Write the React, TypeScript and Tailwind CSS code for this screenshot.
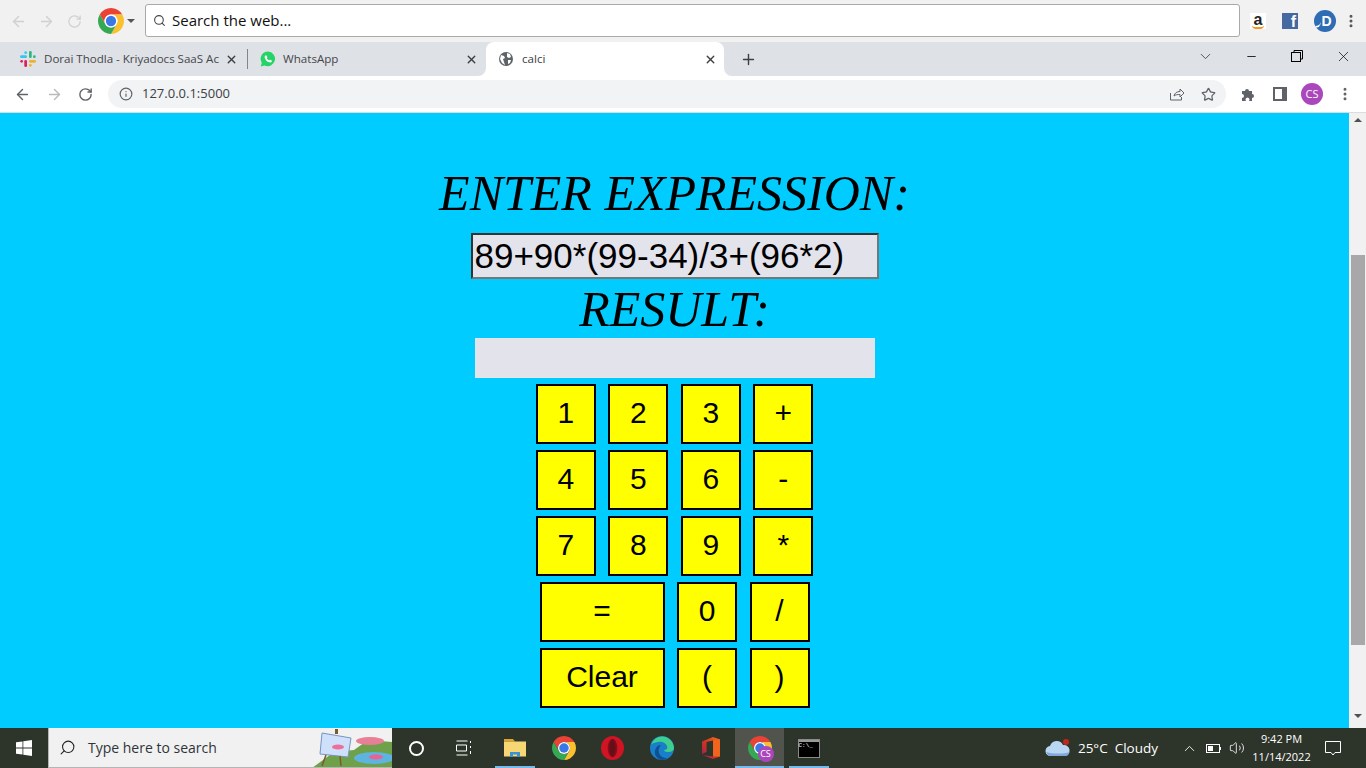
import {
  ArrowLeft,
  ArrowRight,
  ChevronDown,
  ChevronUp,
  EllipsisVertical,
  Info,
  Minus,
  Plus,
  RotateCw,
  Search,
  Star,
  Volume2,
  X,
} from "lucide-react";

const uiFont = "font-['Open_Sans','Noto_Sans',sans-serif]";

const rows = [
  { wide: false, keys: ["1", "2", "3", "+"] },
  { wide: false, keys: ["4", "5", "6", "-"] },
  { wide: false, keys: ["7", "8", "9", "*"] },
  { wide: true, keys: ["=", "0", "/"] },
  { wide: true, keys: ["Clear", "(", ")"] },
];

function ChromeLogo({ size = 26 }: { size?: number }) {
  return (
    <svg width={size} height={size} viewBox="0 0 48 48">
      <path d="M44.78 12A24 24 0 0 0 3.22 12L13.6 30A12 12 0 0 1 24 12z" fill="#ea4335" />
      <path d="M24 12h20.78A24 24 0 0 1 24 48L34.4 30A12 12 0 0 0 24 12z" fill="#fbc02d" />
      <path d="M24 48A24 24 0 0 1 3.22 12L13.6 30A12 12 0 0 0 34.4 30z" fill="#34a853" />
      <circle cx="24" cy="24" r="12" fill="#fff" />
      <circle cx="24" cy="24" r="9.5" fill="#3b78e7" />
    </svg>
  );
}

function SlackLogo() {
  return (
    <svg width="16" height="16" viewBox="0 0 16 16">
      <rect x="0" y="4.300" width="7" height="2.700" rx="1.350" fill="#36c5f0" />
      <circle cx="5.650" cy="1.650" r="1.350" fill="#36c5f0" />
      <rect x="9" y="0" width="2.700" height="7" rx="1.350" fill="#2eb67d" />
      <circle cx="14.350" cy="5.650" r="1.350" fill="#2eb67d" />
      <rect x="9" y="9" width="7" height="2.700" rx="1.350" fill="#ecb22e" />
      <circle cx="10.350" cy="14.350" r="1.350" fill="#ecb22e" />
      <rect x="4.300" y="9" width="2.700" height="7" rx="1.350" fill="#e01e5a" />
      <circle cx="1.650" cy="10.350" r="1.350" fill="#e01e5a" />
    </svg>
  );
}

function WhatsAppLogo() {
  return (
    <svg width="16" height="16" viewBox="0 0 16 16">
      <path d="M8 .5a7.3 7.3 0 0 0-6.2 11.2L.8 15.4l3.800-1A7.3 7.3 0 1 0 8 .5z" fill="#25d366" />
      <path
        d="M5.600 4.200c-.9.600-1.200 1.800-.6 3.200.8 1.800 2.300 3.300 4.100 3.900 1.300.4 2.300 0 2.700-.9.200-.5.100-.8-.2-1l-1.300-.6c-.3-.1-.5 0-.7.200l-.4.500c-1-.4-1.900-1.200-2.400-2.200l.4-.5c.2-.2.200-.4.100-.7l-.6-1.300c-.2-.3-.6-.4-1.100-.1z"
        fill="#fff"
      />
    </svg>
  );
}

function GlobeIcon() {
  return (
    <svg width="16" height="16" viewBox="0 0 16 16">
      <circle cx="8" cy="8" r="7" fill="#5f6368" />
      <path d="M3 4l3 1 1 2-2 1 1 3 1 3-3-2-2-4zM9 2l3 1 1 3-2 1-2-1zM10 9l3 0-1 3-2 1z" fill="#fff" />
    </svg>
  );
}

function FolderIcon() {
  return (
    <svg width="22" height="18" viewBox="0 0 22 18">
      <path d="M0 0h9l2 2.500H0z" fill="#e0a526" />
      <rect x="0" y="2.500" width="22" height="15" fill="#f7d774" />
      <path d="M6 18v-5h10v5h-3v-2.500H9V18z" fill="#3b93d6" />
    </svg>
  );
}

function OperaIcon() {
  return (
    <svg width="23" height="24" viewBox="0 0 23 24">
      <ellipse cx="11.500" cy="12" rx="11.500" ry="12" fill="#cf1424" />
      <ellipse cx="11.500" cy="12" rx="4.800" ry="9.300" fill="#8c0d18" />
      <ellipse cx="11.500" cy="12" rx="3" ry="8.400" fill="#63101a" />
    </svg>
  );
}

function EdgeIcon() {
  return (
    <svg width="24" height="24" viewBox="0 0 24 24">
      <circle cx="12" cy="12" r="12" fill="#1a7fc9" />
      <path d="M1 9C3 2 10-1 16 1c5 2 8 7 8 11 0 3-3 4-6 4-2 0-4-1-4-2 3 0 4-2 3-4-1-3-5-5-9-4-3 .5-6 1-7 3z" fill="#3ecf8e" />
      <path d="M12 24C6 23 3 17 6 12c1-2 3-3 5-3-2 2-3 5-2 8 1 3 4 5 8 5-1 1-3 2-5 2z" fill="#0f4f94" />
    </svg>
  );
}

function OfficeIcon() {
  return (
    <svg width="18" height="22" viewBox="0 0 18 22">
      <defs>
        <linearGradient id="office" x1="0" y1="1" x2="1" y2="0">
          <stop offset="0" stopColor="#9c1c5e" />
          <stop offset="0.5" stopColor="#d8341f" />
          <stop offset="1" stopColor="#f5741c" />
        </linearGradient>
      </defs>
      <path d="M11 0l7 2.500v17L11 22 0 18l11 1.600V3.500L4.500 5v10L0 17V4.500z" fill="url(#office)" />
      <path d="M11 3.500l7-1v17l-7 0z" fill="#f0641d" />
    </svg>
  );
}

function TaskIcon({ children, active, running }: { children: React.ReactNode; active?: boolean; running?: boolean }) {
  return (
    <div className={`relative flex h-10 w-[49px] shrink-0 items-center justify-center ${active ? "bg-[#51544c]" : ""}`}>
      {children}
      {running && <div className="absolute bottom-0 left-[5px] right-[4px] h-0.5 bg-[#76b9ed]" />}
      {active && <div className="absolute bottom-0 left-0 right-0 h-0.5 bg-[#76b9ed]" />}
    </div>
  );
}

function Key({ label, wide }: { label: string; wide?: boolean }) {
  return (
    <button
      className={`h-[60px] border-2 border-black bg-[#ffff00] pb-[3px] text-center text-[30px] text-black ${
        wide ? "w-[125px]" : "w-[60px]"
      }`}
    >
      {label}
    </button>
  );
}

export default function App() {
  return (
    <div className={`flex h-screen w-screen flex-col overflow-hidden ${uiFont}`}>
      {/* toolbar of the search extension */}
      <div className="flex h-[42px] shrink-0 items-center bg-[#f1f1f1] pl-[10px] pr-[7px]">
        <ArrowLeft size={17} className="text-[#d0d0d0]" />
        <ArrowRight size={17} className="ml-[11px] text-[#d0d0d0]" />
        <RotateCw size={15} className="ml-[12px] text-[#d0d0d0]" />
        <div className="ml-[16px] flex">
          <ChromeLogo />
        </div>
        <div className="ml-[3px] h-0 w-0 border-x-[4px] border-t-[4px] border-x-transparent border-t-[#555]" />
        <div className="mb-px ml-[10px] flex h-[33px] w-[1095px] items-center rounded-[3px] border border-[#a9a9a9] bg-white pl-[7px]">
          <Search size={13} className="text-[#444]" strokeWidth={2} />
          <span className="ml-[6px] text-[15px] text-[#111]">Search the web...</span>
        </div>
        <div className="relative ml-[10px] flex h-4 w-4 items-center justify-center bg-white pb-[3px] font-['Liberation_Sans'] text-[16px] font-bold leading-none text-[#222]">
          a
          <div className="absolute bottom-0 left-0.5 h-1 w-3 rounded-b-full border-b-2 border-[#f29a1f]" />
        </div>
        <div className="ml-[16px] flex h-4 w-4 items-end justify-end bg-[#44689f] pr-[2px] font-['Liberation_Sans'] text-[16px] font-bold leading-[15px] text-white">
          f
        </div>
        <div className="relative ml-[16px] flex h-[22px] w-[22px] items-center justify-center overflow-hidden rounded-full bg-[#2e6db4] pl-[3px] font-['Liberation_Sans'] text-[14px] font-bold text-white">
          D
          <div className="absolute -left-[5px] bottom-[4px] h-[8px] w-[12px] rounded-b-full border-b-2 border-white" />
        </div>
        <EllipsisVertical size={16} className="ml-[7px] text-[#555]" strokeWidth={2.5} />
      </div>

      {/* tab strip */}
      <div className="flex h-[34px] shrink-0 items-center bg-[#dee1e6] text-[11.600px]">
        <div className="flex h-full w-[248px] shrink-0 items-center pl-[20px]">
          <SlackLogo />
          <span className="ml-2 w-[175px] whitespace-nowrap tracking-[-0.03px] text-[#45474a]">Dorai Thodla - Kriyadocs SaaS Ac</span>
          <X size={13} className="ml-[6px] shrink-0 text-[#3c4043]" strokeWidth={2.5} />
          <div className="ml-[9px] h-5 w-px shrink-0 bg-[#80868b]" />
        </div>
        <div className="flex h-full w-[238px] shrink-0 items-center pl-[12px] pr-[8.500px]">
          <WhatsAppLogo />
          <span className="ml-[7px] flex-1 text-[#45474a]">WhatsApp</span>
          <X size={13} className="text-[#3c4043]" strokeWidth={2.5} />
        </div>
        <div className="relative flex h-full w-[238px] shrink-0 items-center rounded-t-lg bg-white pl-[12px] pr-[7.500px]">
          <div className="absolute -left-2 bottom-0 h-2 w-2 bg-white">
            <div className="h-full w-full rounded-br-lg bg-[#dee1e6]" />
          </div>
          <GlobeIcon />
          <span className="ml-2 flex-1 text-[#3c4043]">calci</span>
          <X size={13} className="text-[#3c4043]" strokeWidth={2.5} />
          <div className="absolute -right-2 bottom-0 h-2 w-2 bg-white">
            <div className="h-full w-full rounded-bl-lg bg-[#dee1e6]" />
          </div>
        </div>
        <Plus size={17} className="ml-[15.500px] text-[#3c4043]" strokeWidth={2} />
        <div className="flex-1" />
        <div className="flex items-center pb-[6px]">
          <ChevronDown size={17} className="mr-[31px] text-[#444]" strokeWidth={1.25} />
          <Minus size={13} className="mr-[33.500px] text-black" strokeWidth={1.5} />
          <svg width="12" height="12" viewBox="0 0 12 12" fill="none" stroke="black" className="mr-[31.500px]">
            <rect x="0.500" y="2.500" width="9" height="9" />
            <path d="M3 2.500V.5h8.500V9H9.500" />
          </svg>
          <X size={17} className="mr-[14.500px] text-black" strokeWidth={1} />
        </div>
      </div>

      {/* address bar */}
      <div className="flex h-[37px] shrink-0 items-center border-b border-[#dadce0] bg-white">
        <ArrowLeft size={17} className="ml-[14px] text-[#5f6368]" strokeWidth={2} />
        <ArrowRight size={17} className="ml-[15px] text-[#b8babc]" strokeWidth={2} />
        <RotateCw size={15} className="ml-[15px] text-[#5f6368]" strokeWidth={2.250} />
        <div className="ml-[15px] flex h-7 w-[1118px] items-center rounded-full bg-[#f1f3f4] pl-[11px] pr-[10px]">
          <Info size={14} className="text-[#5f6368]" />
          <span className="ml-[9px] flex-1 text-[13px] text-[#3c4043]">127.0.0.1:5000</span>
          <svg width="16" height="16" viewBox="0 0 16 16" fill="none" stroke="#5f6368" className="mr-[16px]">
            <path d="M1.500 7v7h11v-3M5 10c.5-3 3-4.500 6-4.500V3l4 4-4 4V8.500c-2.500 0-4.500.2-6 1.500z" />
          </svg>
          <Star size={15} className="text-[#5f6368]" strokeWidth={2} />
        </div>
        <svg width="14" height="14" viewBox="0 0 14 14" className="ml-[15px]" fill="#5f6368">
          <path d="M1 4h3a2 2 0 1 1 4 0h3v3a2 2 0 1 1 0 4v3H8a2 2 0 1 0-3 0H1v-3a2 2 0 1 0 0-4z" />
        </svg>
        <div className="ml-[18px] h-3.5 w-3.5 border-2 border-r-[5px] border-[#5f6368]" />
        <div className="ml-[14px] flex h-[22px] w-[22px] items-center justify-center rounded-full bg-[#ab47bc] text-[11px] text-white">
          CS
        </div>
        <EllipsisVertical size={16} className="ml-[14px] text-[#5f6368]" strokeWidth={2.5} />
      </div>

      {/* page */}
      <div className="flex min-h-0 flex-1">
        <main className="flex min-w-0 flex-1 flex-col items-center bg-[#00ccff] pt-[50px] text-black">
          <h1 className="h-[60px] font-['Liberation_Serif',serif] text-[50px] font-normal italic leading-[60px]">
            ENTER EXPRESSION:
          </h1>
          <input
            readOnly
            value="89+90*(99-34)/3+(96*2)"
            className="mt-[10px] h-[46px] w-[408px] border-2 border-b-[#767676] border-l-[#333] border-r-[#767676] border-t-[#333] bg-[#e3e3ec] px-0.5 font-['Liberation_Sans',sans-serif] text-[35px] text-black outline-none"
          />
          <h2 className="h-[59px] font-['Liberation_Serif',serif] text-[50px] font-normal italic leading-[60px]">RESULT:</h2>
          <div className="h-10 w-[400px] bg-[#e3e3ec]" />
          <div className="mt-1.5 flex flex-col gap-1.5 font-['Liberation_Sans',sans-serif]">
            {rows.map((row) => (
              <div key={row.keys[0]} className="flex justify-center gap-[12.500px]">
                {row.keys.map((key, i) => (
                  <Key key={key} label={key} wide={row.wide && i === 0} />
                ))}
              </div>
            ))}
          </div>
        </main>
        <div className="flex w-[17px] shrink-0 flex-col items-center bg-[#f1f1f1]">
          <div className="mt-[5px] h-0 w-0 border-x-[4px] border-b-[4px] border-x-transparent border-b-[#505050]" />
          <div className="mt-[133px] h-[390px] w-[14px] bg-[#a8a8a8]" />
          <div className="mt-[69px] h-0 w-0 border-x-[4px] border-t-[4px] border-x-transparent border-t-[#505050]" />
        </div>
      </div>

      {/* taskbar */}
      <div className="flex h-10 shrink-0 items-center bg-[#2d342a] text-white">
        <div className="flex h-10 w-12 shrink-0 items-center justify-center">
          <svg width="16" height="16" viewBox="0 0 16 16" fill="#fff">
            <path d="M0 2.300l6.500-.9v6.200H0zM7.300 1.300L16 0v7.600H7.300zM0 8.400h6.500v6.200L0 13.700zM7.300 8.400H16V16l-8.700-1.200z" />
          </svg>
        </div>
        <div className="flex h-10 w-[344px] shrink-0 items-center overflow-hidden border-b border-l border-[#b5b5b5] bg-[#f1f1f1] pl-[10px] text-[14px] text-[#30343a]">
          <Search size={17} className="-scale-x-100 text-[#222]" strokeWidth={1.5} />
          <span className="ml-[12px] flex-1">Type here to search</span>
          <svg width="80" height="40" viewBox="0 0 80 40">
            <path d="M0 40l22-16 20-2 14-10 24 2v26z" fill="#6ea14a" />
            <ellipse cx="58" cy="13" rx="14" ry="4" fill="#e77f96" />
            <ellipse cx="62" cy="30" rx="20" ry="6" fill="#5db4e0" />
            <ellipse cx="64" cy="29" rx="7" ry="2.500" fill="#ee5f93" />
            <path d="M10 5l29 5-3 19-28-3z" fill="#cfe0fa" stroke="#7894c4" />
            <rect x="23" y="1" width="3" height="5" fill="#7d5a2a" />
            <path d="M14 27l-4 11M28 28l1 10" stroke="#7d5a2a" strokeWidth="1.500" />
            <ellipse cx="26" cy="19" rx="6" ry="2.500" fill="#ee6f9b" />
          </svg>
        </div>
        <div className="flex h-10 w-[48px] shrink-0 items-center justify-center">
          <div className="h-[15px] w-[15px] rounded-full border-2 border-white" />
        </div>
        <div className="mr-[3px] flex h-10 w-[47px] shrink-0 items-center justify-center">
          <svg width="16" height="16" viewBox="0 0 16 16" fill="none" stroke="#fff">
            <path d="M.5 1h11M.5 15h11M.5 5h10v6H.5zM14.500 1v2M14.500 6v2M14.500 11v3" />
          </svg>
        </div>
        <TaskIcon running>
          <FolderIcon />
        </TaskIcon>
        <TaskIcon>
          <ChromeLogo size={24} />
        </TaskIcon>
        <TaskIcon>
          <OperaIcon />
        </TaskIcon>
        <TaskIcon>
          <EdgeIcon />
        </TaskIcon>
        <TaskIcon>
          <OfficeIcon />
        </TaskIcon>
        <TaskIcon active>
          <div className="relative flex">
            <ChromeLogo size={24} />
            <div className="absolute -bottom-0.5 -right-0.5 flex h-4 w-4 items-center justify-center rounded-full bg-[#ab47bc] text-[9px]">
              CS
            </div>
          </div>
        </TaskIcon>
        <TaskIcon running>
          <div className="flex h-[19px] w-[22px] flex-col border border-[#8a8a8a] bg-black">
            <div className="h-0.5 bg-[#9a9a9a]" />
            <span className="font-['Liberation_Mono',monospace] text-[6px] leading-[8px] text-white">C:\_</span>
          </div>
        </TaskIcon>
        <div className="flex-1" />
        <svg width="26" height="18" viewBox="0 0 26 18" className="mr-[7px]">
          <path d="M6 17a5 5 0 0 1-1-10 7 7 0 0 1 13-1 5.500 5.500 0 0 1 2 11z" fill="#b9d6f2" />
          <path d="M1.500 13c5 2 18 2 23 0-1 3-2 4-4 4H6c-2 0-4-1-4.500-4z" fill="#7fa8d8" />
          <circle cx="21" cy="3" r="3" fill="#c4261d" />
        </svg>
        <span className="whitespace-pre text-[13.500px]">25°C  Cloudy</span>
        <ChevronUp size={17} className="ml-[22.500px]" strokeWidth={1.250} />
        <div className="ml-[8.500px] flex h-[9px] w-[14px] items-center border border-white pl-px">
          <div className="h-[5px] w-[5px] bg-white" />
        </div>
        <div className="mr-[8px] h-[3px] w-px bg-white" />
        <Volume2 size={16} strokeWidth={1.250} />
        <div className="ml-[7.500px] flex w-[58px] flex-col items-center text-[11px] leading-[18px]">
          <span>9:42 PM</span>
          <span>11/14/2022</span>
        </div>
        <svg width="16" height="16" viewBox="0 0 16 16" fill="none" stroke="#fff" className="ml-[14.500px] mr-[25px]">
          <path d="M.5 1.500h15v11H10L8 15l-2-2.500H.5z" />
        </svg>
      </div>
    </div>
  );
}
